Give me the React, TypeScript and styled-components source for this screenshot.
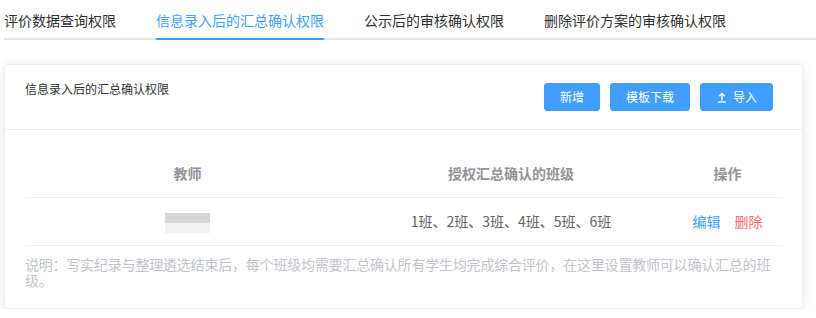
import styled, { createGlobalStyle } from 'styled-components'

const GlobalStyle = createGlobalStyle`
  html, body {
    margin: 0;
    padding: 0;
    background: #fff;
    font-family: "Noto Sans CJK SC", "Microsoft YaHei", sans-serif;
  }
  * { box-sizing: border-box; }
`;

const Page = styled.div`
  padding-left: 4px;
  width: 816px;
`;

const TabBar = styled.div`
  display: flex;
  height: 40px;
  box-shadow: inset 0 -2px 0 #e4e7ed;
`;

const TabItem = styled.div<{ first?: boolean }>`
  padding: 0 20px;
  padding-left: ${({ first }) => (first ? '0' : '20px')};
  height: 40px;
  cursor: pointer;
`;

const TabLabel = styled.span<{ active?: boolean }>`
  display: inline-block;
  height: 40px;
  line-height: 40px;
  font-size: 14px;
  color: ${({ active }) => (active ? '#409eff' : '#303133')};
  border-bottom: 2px solid ${({ active }) => (active ? '#409eff' : 'transparent')};
`;

const Card = styled.div`
  margin-top: 24px;
  width: 799px;
  background: #fff;
  border: 1px solid #ebeef5;
  border-radius: 4px;
  box-shadow: 0 2px 12px 0 rgba(0, 0, 0, 0.1);
`;

const CardHeader = styled.div`
  display: flex;
  justify-content: space-between;
  align-items: flex-start;
  padding: 18px 29px 18px 20px;
  border-bottom: 1px solid #ebeef5;
`;

const CardTitle = styled.div`
  font-size: 12px;
  line-height: 12px;
  color: #303133;
`;

const ButtonGroup = styled.div`
  display: flex;
  gap: 10px;
`;

const Button = styled.button`
  display: inline-flex;
  align-items: center;
  justify-content: center;
  gap: 5px;
  height: 28px;
  padding: 0 15px;
  border: 1px solid #409eff;
  border-radius: 3px;
  background: #409eff;
  color: #fff;
  font-family: inherit;
  font-size: 12px;
  line-height: 12px;
  cursor: pointer;
`;

const CardBody = styled.div`
  padding: 20px;
`;

const Table = styled.table`
  width: 100%;
  border-collapse: collapse;
  table-layout: fixed;
`;

const Th = styled.th`
  padding: 12px 0;
  line-height: 23px;
  font-size: 14px;
  font-weight: bold;
  color: #909399;
  text-align: center;
  border-bottom: 1px solid #ebeef5;
`;

const Td = styled.td`
  padding: 12px 0;
  line-height: 23px;
  font-size: 14px;
  color: #606266;
  text-align: center;
  border-bottom: 1px solid #ebeef5;
  vertical-align: middle;
`;

const Redacted = styled.span`
  display: inline-block;
  width: 45px;
  height: 20px;
  vertical-align: middle;
  background: linear-gradient(to bottom, #d6d6d8 0 50%, #f1f2f2 50% 100%);
`;

const Actions = styled.div`
  display: flex;
  justify-content: center;
  gap: 14px;
`;

const LinkButton = styled.span<{ danger?: boolean }>`
  color: ${({ danger }) => (danger ? '#f56c6c' : '#409eff')};
  cursor: pointer;
`;

const Note = styled.p`
  margin: 10px 0 0;
  font-size: 14px;
  line-height: 16px;
  letter-spacing: -0.2px;
  color: #c0c4cc;
`;

const UploadIcon = () => (
  <svg width="12" height="12" viewBox="0 0 12 12" fill="none" stroke="#fff" strokeWidth="1.3">
    <path d="M2 11h8" />
    <path d="M6 9.5V2.5" />
    <path d="M3.2 5.3L6 2.5l2.8 2.8" />
  </svg>
);

const tabs = ['评价数据查询权限', '信息录入后的汇总确认权限', '公示后的审核确认权限', '删除评价方案的审核确认权限'];

const rows = [{ id: 1, classes: '1班、2班、3班、4班、5班、6班' }];

function App() {
  return (
    <Page>
      <GlobalStyle />
      <TabBar>
        {tabs.map((t, i) => (
          <TabItem key={t} first={i === 0}>
            <TabLabel active={i === 1}>{t}</TabLabel>
          </TabItem>
        ))}
      </TabBar>
      <Card>
        <CardHeader>
          <CardTitle>信息录入后的汇总确认权限</CardTitle>
          <ButtonGroup>
            <Button>新增</Button>
            <Button>模板下载</Button>
            <Button>
              <UploadIcon />
              导入
            </Button>
          </ButtonGroup>
        </CardHeader>
        <CardBody>
          <Table>
            <colgroup>
              <col style={{ width: 325 }} />
              <col style={{ width: 322 }} />
              <col style={{ width: 111 }} />
            </colgroup>
            <thead>
              <tr>
                <Th>教师</Th>
                <Th>授权汇总确认的班级</Th>
                <Th>操作</Th>
              </tr>
            </thead>
            <tbody>
              {rows.map((r) => (
                <tr key={r.id}>
                  <Td><Redacted /></Td>
                  <Td>{r.classes}</Td>
                  <Td>
                    <Actions>
                      <LinkButton>编辑</LinkButton>
                      <LinkButton danger>删除</LinkButton>
                    </Actions>
                  </Td>
                </tr>
              ))}
            </tbody>
          </Table>
          <Note>说明：写实纪录与整理遴选结束后，每个班级均需要汇总确认所有学生均完成综合评价，在这里设置教师可以确认汇总的班级。</Note>
        </CardBody>
      </Card>
    </Page>
  )
}

export default App
